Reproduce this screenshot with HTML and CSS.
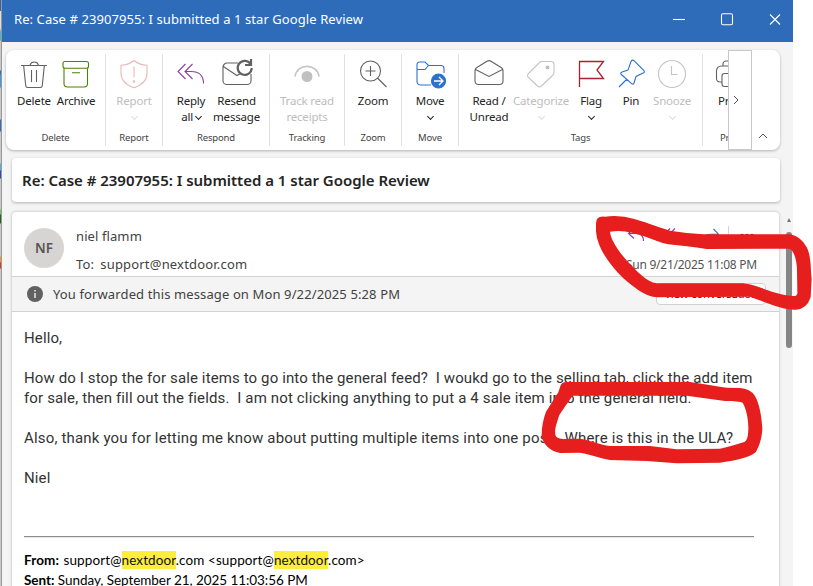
FILE: index.html
```html
<!DOCTYPE html>
<html lang="en">
<head>
<meta charset="utf-8">
<title>Re: Case # 23907955: I submitted a 1 star Google Review</title>
<link rel="stylesheet" href="styles.css">
</head>
<body>
<div class="edge"></div>
<main class="window">
  <header class="titlebar">
    <span class="title">Re: Case # 23907955: I submitted a 1 star Google Review</span>
    <div class="controls">
      <svg viewBox="0 0 48 42"><path d="M9 19.500h12"/></svg>
      <svg viewBox="0 0 48 42"><rect x="9.500" y="13.700" width="11" height="11" rx="1.500"/></svg>
      <svg viewBox="0 0 48 42"><path d="M10 14.500l10 10M20 14.500l-10 10"/></svg>
    </div>
  </header>

  <nav class="ribbon">
    <section class="group g-delete">
      <div class="items">
        <div class="item w42"><svg class="ic" viewBox="0 0 32 32"><path d="M3 7.500h26M12 7a4.500 4.500 0 0 1 8.500 0M5.700 8l2 19.500c.1 1.400 1 2 2 2h12.600c1 0 1.900-.6 2-2l2-19.500M13.500 12v12M18.500 12v12"/></svg><b>Delete</b></div>
        <div class="item w42"><svg class="ic green" viewBox="0 0 32 32"><rect x="3" y="3.500" width="25.500" height="6.800" rx="2"/><path d="M4 10.500v15c0 2 1.500 3.500 3.500 3.500h16.500c2 0 3.500-1.500 3.500-3.500v-15M12 14.700h8"/></svg><b>Archive</b></div>
      </div>
      <small>Delete</small>
    </section>
    <section class="group g-report">
      <div class="items">
        <div class="item off"><svg class="ic rose" viewBox="0 0 32 32"><path d="M16 2.500c3.500 3 8 4.500 13 4.800V15c0 7-5 12-13 14.800C8 27 3 22 3 15V7.300c5-.3 9.500-1.800 13-4.800zM16 8.500v11"/><circle cx="16" cy="23.500" r=".7"/></svg><b>Report</b><i class="chev"></i></div>
      </div>
      <small>Report</small>
    </section>
    <section class="group g-respond">
      <div class="items">
        <div class="item w40"><svg class="ic purple" viewBox="0 0 32 32"><path d="M10.500 6L3 13.500l7.500 7.500M17.500 6L10 13.500l7.500 7.500M10 13.500h6c8 0 12.500 4 12.500 12"/></svg><b>Reply<br>all <i class="chev inline"></i></b></div>
        <div class="item w51"><svg class="ic" viewBox="0 0 32 32"><path d="M17 5H6C4 5 2 7 2 9v14c0 2 2 3.500 4 3.500h20c2 0 4-1.500 4-3.500v-7M2.300 8.500L16 17.500l3.500-2"/><path class="bold" d="M29.200 5.500A7 7 0 1 0 30.700 10M30 1v6h-6"/></svg><b>Resend<br>message</b></div>
      </div>
      <small>Respond</small>
    </section>
    <section class="group g-track">
      <div class="items">
        <div class="item off"><svg class="ic eye" viewBox="0 0 32 32"><path d="M4 18.500C6 5 26 5 28 18.500"/><circle cx="16" cy="18.500" r="5.500"/></svg><b>Track read<br>receipts</b></div>
      </div>
      <small>Tracking</small>
    </section>
    <section class="group g-zoom">
      <div class="items">
        <div class="item"><svg class="ic" viewBox="0 0 32 32"><circle cx="13.500" cy="13" r="10"/><path d="M8.500 13h10M13.500 8v10M20.500 20l9 9"/></svg><b>Zoom</b></div>
      </div>
      <small>Zoom</small>
    </section>
    <section class="group g-move">
      <div class="items">
        <div class="item"><svg class="ic blue" viewBox="-1 0 32 32"><path d="M16 27H5.500C4 27 2 25.500 2 24V6.500C2 5 3.500 4 4.500 4H10l3.500 3.500H26c2 0 3 1.500 3 3V15M2 11.500h8l3.500-4"/><circle class="solid" cx="23.500" cy="23" r="7"/><path class="arrow" d="M19 23h8.500M24 19l4 4-4 4"/></svg><b>Move</b><i class="chev"></i></div>
      </div>
      <small>Move</small>
    </section>
    <section class="group g-tags">
      <div class="items">
        <div class="item w40"><svg class="ic" viewBox="0 0 32 32"><path d="M2 12.500c0-1.200.5-2 1.500-2.700L14 3.200c1.300-.8 2.700-.8 4 0l10.500 6.600c1 .7 1.500 1.500 1.500 2.700V23c0 2-1.500 3.500-3.500 3.500h-21C3.500 26.500 2 25 2 23zM2.500 11.500L16 18.500l13.500-7"/></svg><b>Read /<br>Unread</b></div>
        <div class="item w64 off"><svg class="ic" viewBox="0 0 32 32"><path d="M17 3.500h9c2 0 3 1 3 3v8c0 1-.3 1.700-1 2.500L16.500 28c-1.300 1.300-2.700 1.300-4 0L3.500 19.500c-1.300-1.300-1.300-2.700 0-4L14.500 4.500c.7-.7 1.500-1 2.500-1z"/><circle class="dot" cx="22.500" cy="9.500" r="2"/></svg><b>Categorize</b><i class="chev"></i></div>
        <div class="item w36"><svg class="ic red" viewBox="0 0 32 32"><path d="M4.500 29V3.500H28.500l-6.500 8.500 6.500 8.500H4.500"/></svg><b>Flag</b><i class="chev"></i></div>
        <div class="item w44"><svg class="ic blue" viewBox="-1 0 32 32"><path d="M3 29l8-8M15 3.500c.8-1.700 2-1.700 3.200-.7l9.500 9.500c1 1 .8 2-.6 2.800L20 18.500l-2 6.500c-.4 1.300-1.500 1.600-2.400.6L5.300 16.500c-1-1-.6-2 .7-2.400l6-2z"/></svg><b>Pin</b></div>
        <div class="item w38 off"><svg class="ic" viewBox="0 0 32 32"><circle cx="16" cy="16" r="13.500"/><path d="M15.500 8v8.500h6"/></svg><b>Snooze</b><i class="chev"></i></div>
      </div>
      <small>Tags</small>
    </section>
    <section class="group g-print">
      <div class="items">
        <div class="item w40"><svg class="ic" viewBox="0 0 32 32"><path d="M9 8V6c0-1.500 1.500-3 3-3h8c1.500 0 3 1.500 3 3v2M8 24H6c-2 0-3.500-1.500-3.500-3.500V13c0-3 2-5 5-5h17c3 0 5 2 5 5v7.500c0 2-1.500 3.500-3.500 3.500h-2M8 18c0-1.500 1-2.500 2.500-2.500h11c1.500 0 2.500 1 2.500 2.500v8c0 1.500-1 2.500-2.500 2.500h-11C9 28.500 8 27.500 8 26z"/></svg><b>Print</b></div>
      </div>
      <small>Print</small>
    </section>
    <div class="more"><svg viewBox="0 0 8 10"><path d="M2 1l4 4-4 4"/></svg></div>
    <div class="collapse"><svg viewBox="0 0 10 6"><path d="M1 5l4-4 4 4"/></svg></div>
  </nav>

  <h1 class="subject">Re: Case # 23907955: I submitted a 1 star Google Review</h1>

  <div class="reading">
    <article class="message">
      <div class="sender">
        <div class="avatar">NF</div>
        <div class="who">
          <p>niel flamm</p>
          <p><span class="to">To:</span>support@nextdoor.com</p>
        </div>
        <div class="meta">
          <div class="actions">
            <svg class="purple" viewBox="0 0 18 16"><path d="M8 .5L2.500 5.500 8 10.500M2.500 5.500H10c5 0 7.500 2 7.500 7.500"/></svg>
            <svg class="purple" viewBox="0 0 18 16"><path d="M6 .5L.5 6 6 11.500M11 .5L5.500 6 11 11.500M5.500 6H9c5 0 7 2 7 7"/></svg>
            <svg class="blue" viewBox="0 0 18 16"><path d="M11.500 1l5 5.200-5 5.200M16 6.200H9c-5 0-7 2-7 7"/></svg>
            <span class="rule"></span>
            <svg class="dots" viewBox="0 0 18 16"><circle cx="3" cy="7.500" r="1.700"/><circle cx="8" cy="7.500" r="1.700"/><circle cx="13" cy="7.500" r="1.700"/></svg>
          </div>
          <p class="date">Sun 9/21/2025 11:08 PM</p>
        </div>
      </div>
      <div class="info">
        <svg viewBox="0 0 16 16"><circle cx="8" cy="8" r="8"/><path d="M8 7v5M8 4v1.500"/></svg>
        <span>You forwarded this message on Mon 9/22/2025 5:28 PM</span>
        <button>View conversation</button>
      </div>
      <div class="body">
        <p>Hello,</p>
        <p>How do I stop the for sale items to go into the general feed?&nbsp; I woukd go to the selling tab, click the add item<br><span class="l2">for sale, then fill out the fields.&nbsp; I am not clicking anything to put a 4 sale item into the general field.</span></p>
        <p class="also">Also, thank you for letting me know about putting multiple items into one post.&nbsp; Where is this in the ULA?</p>
        <p>Niel</p>
        <hr>
        <div class="quoted">
          <p class="from"><strong>From:</strong> support@<mark>nextdoor</mark>.com &lt;support@<mark>nextdoor</mark>.com&gt;</p>
          <p><strong>Sent:</strong> Sunday, September 21, 2025 11:03:56 PM</p>
        </div>
      </div>
    </article>
    <div class="scroll"><span class="up"></span><span class="thumb"></span></div>
  </div>
</main>

<svg class="ink" viewBox="0 0 813 586">
  <g transform="translate(560 200) scale(.33333)"><path d="M108 72Q107 46 135 50Q180 44 223 57C270 70 300 84 330 92Q380 100 430 103L690 103Q722 108 740 142C755 170 751 210 755 235L752 292Q740 328 708 329C665 330 610 304 570 290L290 292C260 290 235 273 190 235C150 195 112 145 108 95ZM150 95C152 120 180 160 205 187C230 213 260 247 290 250L540 250C590 250 625 280 697 288Q714 290 712 275L711 210C711 185 702 145 685 146L440 147C400 141 360 137 325 133C275 122 215 83 150 95Z"/></g>
  <g transform="translate(520 350) scale(.33333)"><path d="M120 112Q123 96 140 96L510 96Q570 106 620 113L660 114Q690 115 705 138C720 165 725 205 727 235C726 265 718 288 708 306C685 325 645 331 600 338L470 340L380 333L270 330C240 325 215 314 180 308L120 309C90 304 66 280 65 255C65 230 70 207 78 185L115 127ZM158 137Q136 167 118 195C110 220 102 240 107 257C115 272 150 265 185 267C215 272 240 285 270 288L390 288L470 298L600 296C630 290 655 282 673 276C685 270 685 245 685 230C684 200 678 175 668 158C650 152 635 155 615 153L500 137Z"/></g>
</svg>
</body>
</html>
```
FILE: styles.css
```css
* { box-sizing: border-box; }
body {
  margin: 0;
  width: 813px;
  height: 586px;
  overflow: hidden;
  display: flex;
  background: #fff;
  font-family: "Noto Sans", sans-serif;
  color: #242424;
}
p, h1 { margin: 0; }
svg { fill: none; flex: none; }
.edge {
  width: 2px;
  flex: none;
  border-right: 1px solid #999;
  background: linear-gradient(#2d66ad 0 11px, #ddd 11px 28px, #45b4dd 32px 40px, #c8c8c8 41px 70px, #2f6dbe 71px 74px, #3d9ae0 75px 87px, #c8c8c8 88px 119px, #2f6dbe 120px 131px, #c8c8c8 132px 163px, #4bb0ee 164px 170px, #3442c8 171px 178px, #c8c8c8 179px 209px, #75c565 210px 214px, #1b6522 215px 223px, #c8c8c8 224px 256px, #e39945 257px 262px, #d03b24 263px 268px, #c8c8c8 269px);
}
.window {
  width: 791px;
  height: 586px;
  background: #f4f4f4;
  display: flex;
  flex-direction: column;
  overflow: hidden;
}
.titlebar {
  height: 42px;
  flex: none;
  display: flex;
  align-items: center;
  justify-content: space-between;
  padding-left: 12px;
  background: #2e6cba;
  color: #fff;
}
.title { font-size: 13px; letter-spacing: .08px; padding-bottom: 4px; }
.controls { display: flex; margin-right: -15px; }
.controls svg { width: 48px; height: 42px; stroke: #fff; stroke-width: 1.1; }
.ribbon {
  display: flex;
  flex: none;
  width: 774px;
  height: 100px;
  margin: 8px 0 0 4px;
  background: #fff;
  border-radius: 8px;
  box-shadow: 0 1px 3px rgba(0, 0, 0, .28);
}
.group {
  display: flex;
  flex-direction: column;
  flex: none;
  height: 92px;
  margin-top: 4px;
  border-right: 1px solid #e0e0e0;
}
.g-delete { width: 100px; }
.g-report, .g-zoom, .g-move { width: 57px; }
.g-respond { width: 107px; }
.g-track { width: 75px; }
.g-tags { width: 244px; }
.g-print { width: 25px; overflow: hidden; border: 0; padding-left: 10px; }
.items { display: flex; justify-content: center; height: 78px; padding-top: 4px; }
.g-delete .items { padding-right: 1px; }
.g-respond .items { padding-left: 1px; }
.g-tags .items { justify-content: flex-start; padding-left: 10px; }
.g-print .items { justify-content: flex-start; }
.item {
  display: flex;
  flex-direction: column;
  align-items: center;
  flex: none;
  font-size: 11.5px;
  line-height: 16px;
  letter-spacing: -.2px;
  white-space: nowrap;
  text-align: center;
}
.item b { font-weight: 400; margin-top: 3px; }
.w36 { width: 36px; } .w38 { width: 38px; } .w40 { width: 40px; }
.w42 { width: 42px; } .w44 { width: 44px; } .w51 { width: 51px; } .w64 { width: 64px; }
.group small {
  font-size: 9.5px;
  line-height: 12px;
  letter-spacing: -.15px;
  text-align: center;
  color: #424242;
}
.g-print small { align-self: flex-start; padding-left: 7px; }
.g-print .item { align-items: flex-start; }
.g-print b { padding-left: 5px; }
.g-print .ic { margin-left: 1px; }
.ic { width: 32px; height: 32px; stroke: #616161; stroke-width: 1.1; }
.green { stroke: #498205; }
.rose { stroke: #e8b8ba; }
.purple { stroke: #8a3fa5; }
.blue { stroke: #2b72ce; }
.red { stroke: #a4262c; stroke-width: 1.300; }
.bold { stroke-width: 2.200; }
.solid { fill: #2b72ce; }
.arrow { stroke: #fff; stroke-width: 1.300; }
.off { color: #bdbdbd; }
.off .ic:not(.rose) { stroke: #c4c4c4; }
.eye circle, .dot { fill: #c0c0c0; stroke: none; }
.off .eye { stroke-width: 1.600; }
.chev {
  width: 5px;
  height: 5px;
  margin-top: 5px;
  border-right: 1px solid currentColor;
  border-bottom: 1px solid currentColor;
  transform: rotate(45deg);
}
.off .chev { border-color: #dedede; }
.inline { display: inline-block; margin: 0 0 2px; }
.more {
  width: 24px;
  flex: none;
  border: 1px solid #c8c8c8;
  display: flex;
  align-items: center;
  justify-content: flex-start;
  padding-left: 3px;
}
.more svg { width: 8px; height: 10px; stroke: #555; }
.collapse { width: 28px; display: flex; align-items: flex-end; padding: 0 0 11px 6px; }
.collapse svg { width: 10px; height: 6px; stroke: #555; }
.subject {
  flex: none;
  width: 768px;
  height: 44px;
  margin: 8px 0 0 10px;
  padding-left: 10px;
  border-radius: 4px;
  background: #fff;
  box-shadow: 0 1px 3px rgba(0, 0, 0, .28);
  font-size: 15px;
  font-weight: 600;
  line-height: 45px;
  letter-spacing: -.02px;
}
.reading { display: flex; flex: 1; margin-top: 10px; padding-left: 10px; }
.message {
  width: 767px;
  flex: none;
  height: 390px;
  border-radius: 4px;
  background: #fff;
  box-shadow: 0 0 3px rgba(0, 0, 0, .28);
}
.sender { display: flex; height: 65px; padding: 0 9px 0 12px; border-bottom: 1px solid #d1d1d1; }
.avatar {
  width: 40px;
  height: 40px;
  margin-top: 16px;
  border-radius: 50%;
  background: #d6d5d4;
  color: #555;
  text-align: center;
  font: 600 13.5px/40px "Noto Sans", sans-serif;
}
.who { margin-left: 12px; padding-top: 14px; font-size: 13px; letter-spacing: .1px; line-height: 20px; color: #424242; }
.who p + p { margin-top: 8px; letter-spacing: .19px; }
.to { margin-right: 6px; }
.meta { margin-left: auto; padding: 16px 13px 0 0; }
.actions { display: flex; align-items: flex-start; justify-content: flex-end; height: 27px; }
.actions svg { width: 18px; height: 16px; margin-right: 20px; stroke-width: 1.1; }
.actions .rule { width: 1px; height: 16px; margin: -2px 10px 0 -12px; background: #d1d1d1; }
.actions .dots { margin-right: 0; fill: #242424; }
.date { font-size: 12px; letter-spacing: -.25px; line-height: 20px; color: #555; }
.info {
  display: flex;
  align-items: center;
  height: 35px;
  padding: 0 13px 0 15px;
  background: #f4f4f4;
  border-bottom: 1px solid #d1d1d1;
  color: #424242;
  font-size: 13px;
  letter-spacing: .12px;
}
.info svg { width: 16px; height: 16px; margin-right: 10px; fill: #616161; }
.info path { stroke: #fff; stroke-width: 1.300; }
.info button {
  width: 110px;
  height: 22px;
  margin-left: auto;
  padding: 0;
  border: 1px solid #d1d1d1;
  border-radius: 4px;
  background: #fff;
  color: #242424;
  font: 11.5px/20px "Noto Sans", sans-serif;
  letter-spacing: -.25px;
}
.body { padding: 16px 0 0 12px; font: 15px/20px Roboto, sans-serif; color: #333; letter-spacing: .12px; white-space: nowrap; }
.body > p { margin-bottom: 20px; }
.l2 { letter-spacing: .14px; }
.body .also { letter-spacing: .17px; }
.body hr { width: 730px; height: 2px; margin: 48px 0 0; border: 0; border-top: 1px solid #8c8c8c; border-bottom: 1px solid #e8e8e8; }
.quoted { margin-top: 12px; font: 13.5px/20px Lato, sans-serif; color: #000; letter-spacing: -.05px; }
.quoted .from { letter-spacing: .1px; }
.from strong { margin-right: 1px; }
mark { background: #fdee3b; color: #111; padding: 1px 0; }
.scroll { display: flex; flex-direction: column; align-items: center; width: 13px; margin-left: 5px; padding-top: 6px; }
.up { border: 2.500px solid transparent; border-top: 0; border-bottom: 4px solid #777; }
.thumb { width: 6px; height: 116px; margin-top: 10px; border-radius: 3px; background: #858585; }
.ink { position: absolute; left: 0; top: 0; width: 813px; height: 586px; fill: #e61e1d; fill-rule: evenodd; pointer-events: none; }
```
